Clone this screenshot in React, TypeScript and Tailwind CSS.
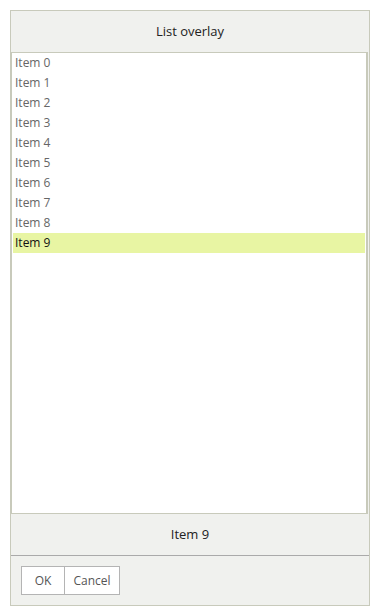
import React from "react";

export default function App() {
  const items = Array.from({ length: 10 }, (_, i) => `Item ${i}`);
  return (
    <div className="w-[384px] h-[614px] bg-white pt-[10px] pl-[10px]" style={{ fontFamily: '"Open Sans", "Noto Sans", sans-serif' }}>
      <div className="w-[360px] h-[596px] border border-[#c8cabb] bg-[#f0f1ee] flex flex-col">
        <div className="h-[41px] shrink-0 flex items-center justify-center text-[13px] text-[#222]">List overlay</div>
        <div className="flex-1 border border-[#c8cabb] border-r-2 bg-white pl-[1px] pr-[1px] mr-[1px]">
          {items.map((t, i) => (
            <div
              key={t}
              className={`h-[20px] flex items-center pl-[2px] text-[12px] ${i === 9 ? "bg-[#e8f5a3] text-[#111]" : "text-[#666]"}`}
            >
              {t}
            </div>
          ))}
        </div>
        <div className="h-[42px] shrink-0 flex items-center justify-center text-[13px] text-[#222] border-b border-[#aaaaaa]">Item 9</div>
        <div className="h-[49px] shrink-0 flex items-start pl-[10px] pt-[10px]">
          <button className="h-[29px] w-[44px] border border-[#b4b4b4] bg-white text-[12px] text-[#555]">OK</button>
          <button className="h-[29px] w-[55px] border border-[#b4b4b4] border-l-0 bg-white text-[12px] text-[#555]">Cancel</button>
        </div>
      </div>
    </div>
  );
}
